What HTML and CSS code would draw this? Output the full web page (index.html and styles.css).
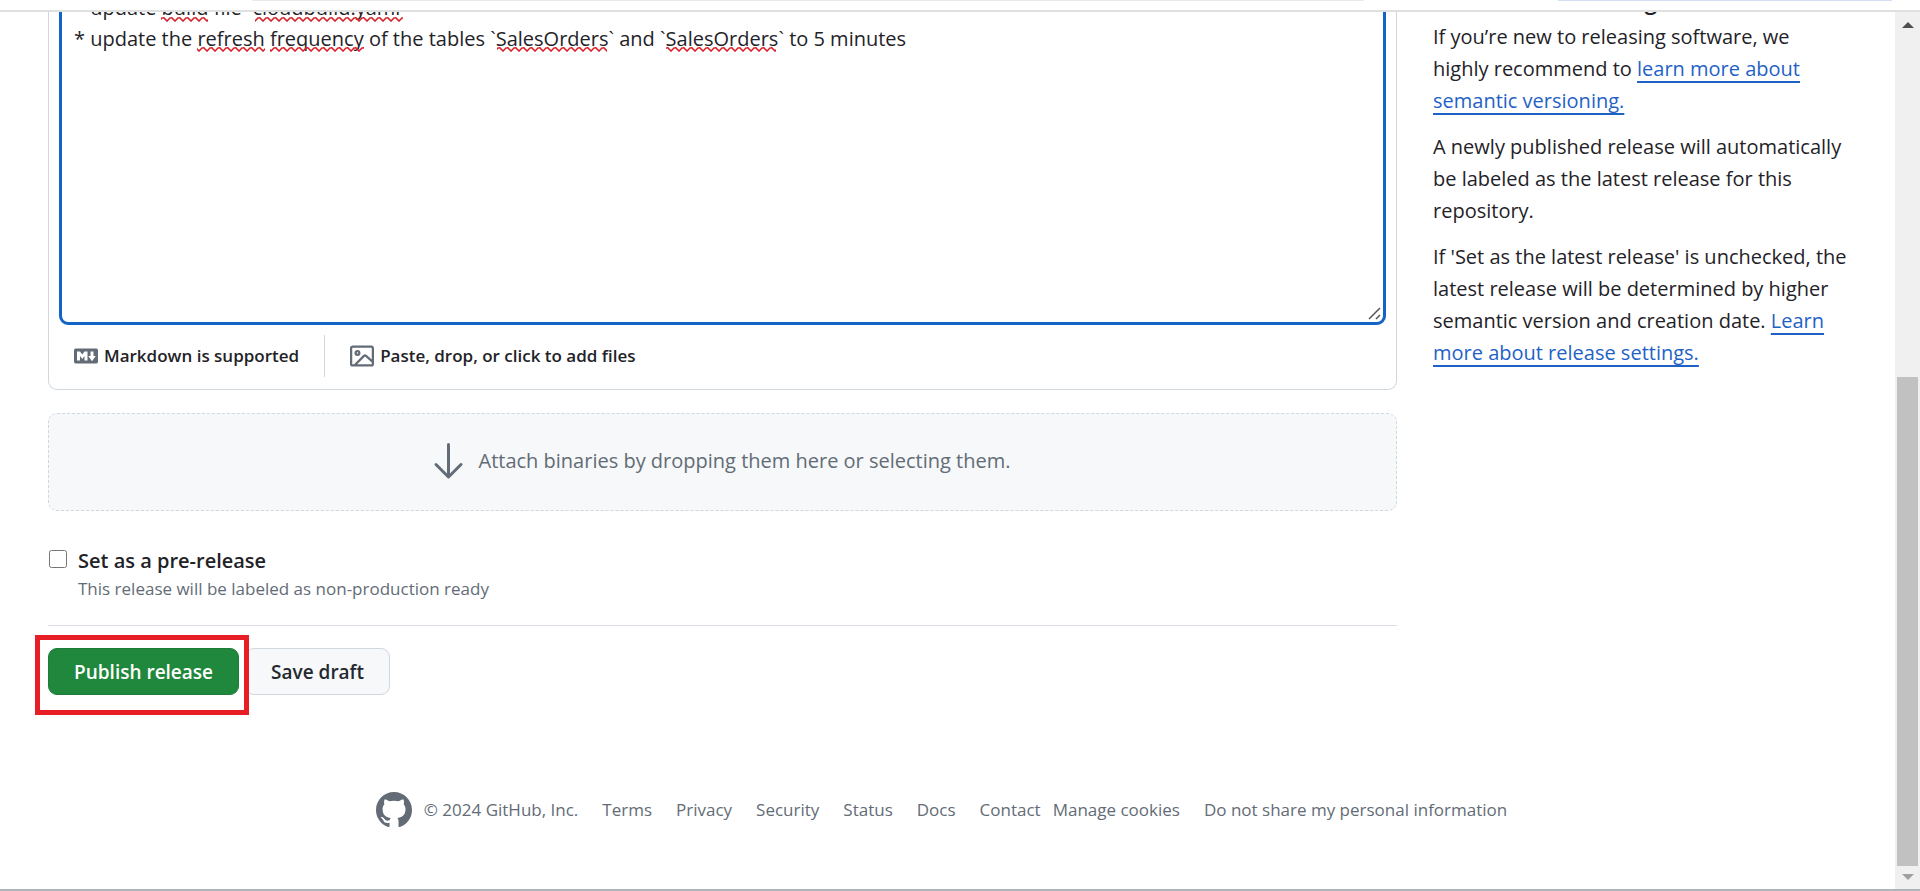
FILE: index.html
```
<!DOCTYPE html>
<html lang="en">
<head>
<meta charset="utf-8">
<title>New release</title>
<link rel="stylesheet" href="styles.css">
</head>
<body>
<div class="chrome"><span class="chrome-tab"></span><span class="chrome-pill"></span></div>
<div class="view">
  <div class="page">
    <div class="layout">
      <main class="form">
        <section class="editor">
          <div class="editor-field">
            <textarea class="notes" aria-label="Describe this release" spellcheck="false">
* update build file `cloudbuild.yaml`
* update the refresh frequency of the tables `SalesOrders` and `SalesOrders` to 5 minutes</textarea>
            <svg class="spelling" width="900" height="100" aria-hidden="true">
              <defs><pattern id="wave" width="8" height="5" patternUnits="userSpaceOnUse"><path d="M-1 0 1 1 4 4 7 1 9 1" fill="none" stroke="#d8232a" stroke-width="1.6"/></pattern></defs>
              <g fill="url(#wave)">
                <rect x="102" y="40" width="47" height="5"/>
                <rect x="196" y="40" width="148" height="5"/>
                <rect x="138" y="70" width="68" height="5"/>
                <rect x="211" y="70" width="94" height="5"/>
                <rect x="438" y="70" width="110" height="5"/>
                <rect x="607" y="70" width="110" height="5"/>
              </g>
            </svg>
            <svg class="grip" width="14" height="14" viewBox="0 0 14 14" aria-hidden="true"><path d="M1 12 12 1M8 12l4-4" fill="none" stroke="#555" stroke-width="1.5"/></svg>
          </div>
          <div class="tools">
            <a class="tool tool-md" href="#markdown"><svg width="24" height="24" viewBox="0 0 16 16" aria-hidden="true"><path d="M14.85 3c.63 0 1.15.52 1.14 1.15v7.7c0 .63-.51 1.15-1.15 1.15H1.15C.52 13 0 12.48 0 11.84V4.15C0 3.52.52 3 1.15 3ZM9 11V5H7L5.5 7 4 5H2v6h2V8l1.5 1.92L7 8v3Zm2.99.5L14.5 8H13V5h-2v3H9.5Z"/></svg>Markdown is supported</a>
            <button class="tool" type="button"><svg width="24" height="24" viewBox="0 0 16 16" aria-hidden="true"><path d="M16 13.25A1.75 1.75 0 0 1 14.25 15H1.75A1.75 1.75 0 0 1 0 13.25V2.75C0 1.784.784 1 1.75 1h12.5c.966 0 1.75.784 1.75 1.75ZM1.75 2.5a.25.25 0 0 0-.25.25v10.5c0 .138.112.25.25.25h.94l.03-.03 6.077-6.078a1.75 1.75 0 0 1 2.412-.06L14.5 10.31V2.75a.25.25 0 0 0-.25-.25Zm12.5 11a.25.25 0 0 0 .25-.25v-.917l-4.298-3.889a.25.25 0 0 0-.344.009L4.81 13.5ZM7 6a2 2 0 1 1-3.999.001A2 2 0 0 1 7 6ZM5.5 6a.5.5 0 1 0-1 0 .5.5 0 0 0 1 0Z"/></svg>Paste, drop, or click to add files</button>
          </div>
        </section>
        <button class="dropzone" type="button"><svg width="48" height="48" viewBox="0 0 24 24" aria-hidden="true"><path d="M4.97 13.22a.75.75 0 0 1 1.06 0L11 18.19V3.75a.75.75 0 0 1 1.5 0v14.44l4.97-4.97a.749.749 0 0 1 1.275.326.749.749 0 0 1-.215.734l-6.25 6.25a.75.75 0 0 1-1.06 0l-6.25-6.25a.75.75 0 0 1 0-1.06Z"/></svg><span>Attach binaries by dropping them here or selecting them.</span></button>
        <div class="option">
          <input class="check" type="checkbox" id="prerelease" aria-describedby="prerelease-note">
          <div>
            <label class="option-label" for="prerelease">Set as a pre-release</label>
            <p class="option-note" id="prerelease-note">This release will be labeled as non-production ready</p>
          </div>
        </div>
        <div class="actions">
          <div class="marked"><button class="btn btn-primary" type="submit">Publish release</button></div>
          <button class="btn btn-draft" type="button">Save draft</button>
        </div>
      </main>
      <aside class="side">
        <h2 class="side-title">Semantic versioning</h2>
        <p>If you’re new to releasing software, we highly recommend to <a href="#semver">learn more about semantic versioning.</a></p>
        <p>A newly published release will automatically be labeled as the latest release for this repository.</p>
        <p>If 'Set as the latest release' is unchecked, the latest release will be determined by higher semantic version and creation date. <a href="#settings">Learn more about release settings.</a></p>
      </aside>
    </div>
    <footer class="footer">
      <svg width="36" height="36" viewBox="0 0 16 16" aria-hidden="true"><path d="M8 0c4.42 0 8 3.58 8 8a8.013 8.013 0 0 1-5.45 7.59c-.4.08-.55-.17-.55-.38 0-.27.01-1.13.01-2.2 0-.75-.25-1.23-.54-1.48 1.78-.2 3.65-.88 3.65-3.95 0-.88-.31-1.59-.82-2.15.08-.2.36-1.02-.08-2.12 0 0-.67-.22-2.2.82-.64-.18-1.32-.27-2-.27-.68 0-1.36.09-2 .27-1.53-1.03-2.2-.82-2.2-.82-.44 1.1-.16 1.92-.08 2.12-.51.56-.82 1.28-.82 2.15 0 3.06 1.86 3.75 3.64 3.95-.23.2-.44.55-.51 1.07-.46.21-1.61.55-2.33-.66-.15-.24-.6-.83-1.23-.82-.67.01-.27.38.01.53.34.19.73.9.82 1.13.16.45.68 1.31 2.69.94 0 .67.01 1.3.01 1.49 0 .21-.15.45-.55.38A7.995 7.995 0 0 1 0 8c0-4.42 3.58-8 8-8Z"/></svg>
      <span>© 2024 GitHub, Inc.</span>
      <nav class="links">
        <a href="#terms">Terms</a>
        <a href="#privacy">Privacy</a>
        <a href="#security">Security</a>
        <a href="#status">Status</a>
        <a href="#docs">Docs</a>
        <a href="#contact">Contact</a>
      </nav>
      <nav class="links">
        <a href="#cookies">Manage cookies</a>
        <a href="#share">Do not share my personal information</a>
      </nav>
    </footer>
  </div>
  <div class="scrollbar" aria-hidden="true">
    <svg width="12" height="6" viewBox="0 0 12 6"><path d="M0 6 6 0l6 6Z" fill="#505050"/></svg>
    <div class="thumb"></div>
    <svg width="12" height="6" viewBox="0 0 12 6"><path d="M0 0h12L6 6Z" fill="#a0a0a0"/></svg>
  </div>
</div>
</body>
</html>
```
FILE: styles.css
```
* {
  box-sizing: border-box;
}

body {
  margin: 0;
  height: 100vh;
  display: flex;
  flex-direction: column;
  overflow: hidden;
  background: #fff;
  color: #1f2328;
  font: 20px/32px "Open Sans", "Noto Sans", sans-serif;
}

button,
textarea {
  font: inherit;
  color: inherit;
}

svg {
  flex: none;
  fill: #636c76;
}

/* browser toolbar edge */
.chrome {
  flex: none;
  height: 12px;
  border-bottom: 2px solid #dfe1e0;
  display: flex;
  justify-content: space-between;
  padding: 0 28px 0 252px;
}

.chrome-tab {
  width: 1112px;
  height: 1px;
  background: #e9eaed;
}

.chrome-pill {
  width: 334px;
  height: 1px;
  background: #d3ddf3;
}

.view {
  flex: 1;
  min-height: 0;
  display: flex;
  border-bottom: 2px solid #adb4bc;
}

.page {
  flex: 1;
  min-width: 0;
  overflow: hidden;
}

.layout {
  display: grid;
  grid-template-columns: minmax(0, 1fr) 415px;
  gap: 36px;
  padding: 0 47px 0 48px;
  margin-top: -36px;
}

.editor {
  border: 1px solid #d0d7de;
  border-top: 0;
  border-radius: 0 0 9px 9px;
  padding: 0 10px 12px;
}

.editor-field {
  position: relative;
}

.notes {
  display: block;
  width: 100%;
  height: 349px;
  padding: 13px 12px;
  border: 3px solid #1464c8;
  border-radius: 9px;
  outline: none;
  resize: none;
  overflow: hidden;
  background: #fff;
  line-height: 31px;
}

.spelling {
  position: absolute;
  left: 0;
  top: 1px;
  pointer-events: none;
}

.grip {
  position: absolute;
  right: 4px;
  bottom: 4px;
  pointer-events: none;
}

.tools {
  display: flex;
  padding: 10px 15px 0;
}

.tool {
  display: flex;
  align-items: center;
  gap: 6px;
  height: 42px;
  padding: 0 0 0 25px;
  border: 0;
  background: none;
  color: #1f2328;
  font-size: 17px;
  font-weight: 600;
  text-decoration: none;
}

.tool-md {
  padding: 0 25px 0 0;
  border-right: 1px solid #d0d7de;
}

.dropzone {
  display: flex;
  align-items: center;
  justify-content: center;
  gap: 6px;
  width: 100%;
  height: 98px;
  margin-top: 23px;
  padding: 0 10px 2px 0;
  border: 1px dashed #d0d7de;
  border-radius: 9px;
  background: #f6f8fa;
  color: #636c76;
}

.option {
  display: flex;
  align-items: flex-start;
  gap: 11px;
  margin-top: 35px;
  padding: 0 0 23px 1px;
  border-bottom: 1px solid #d8dee4;
}

.check {
  width: 18px;
  height: 18px;
  margin: 4px 0 0;
}

.option-label {
  display: block;
  line-height: 30px;
  font-weight: 600;
}

.option-note {
  margin: 0;
  line-height: 26px;
  font-size: 17px;
  color: #636c76;
}

.actions {
  display: flex;
  align-items: flex-start;
  margin: 9px 0 0 -13px;
}

.marked {
  position: relative;
  z-index: 1;
  padding: 8px 5px 15px 8px;
  border: 5px solid #e81e27;
  margin-right: -4px;
}

.btn {
  height: 47px;
  padding: 0 25px;
  border: 1px solid #d0d7de;
  border-radius: 9px;
  background: #f6f8fa;
  color: #24292f;
  font-size: 19px;
  font-weight: 600;
}

.btn-primary {
  display: block;
  border-color: #1c7c38;
  background: #1f883d;
  color: #fff;
}

.btn-draft {
  margin-top: 13px;
}

.side p {
  margin: 0 0 14px;
}

.side-title {
  margin: 8px 0 5px;
  font-size: 23px;
  line-height: 32px;
  font-weight: 600;
}

.side a {
  color: #1f62c6;
  text-decoration: underline 2px;
  text-underline-offset: 5px;
}

.footer {
  display: flex;
  align-items: center;
  justify-content: center;
  gap: 12px;
  margin-top: 77px;
  padding-right: 12px;
  font-size: 17px;
  color: #636c76;
}

.links {
  display: flex;
  gap: 24px;
}

.links:first-of-type {
  margin-left: 12px;
}

.links a {
  color: #636c76;
  text-decoration: none;
}

.scrollbar {
  flex: none;
  width: 25px;
  display: flex;
  flex-direction: column;
  align-items: center;
  justify-content: space-between;
  padding: 10px 0 9px;
  background: #f0f0f0;
}

.thumb {
  width: 21px;
  height: 57%;
  margin: auto 0 8px;
  background: #c1c1c1;
}
```
